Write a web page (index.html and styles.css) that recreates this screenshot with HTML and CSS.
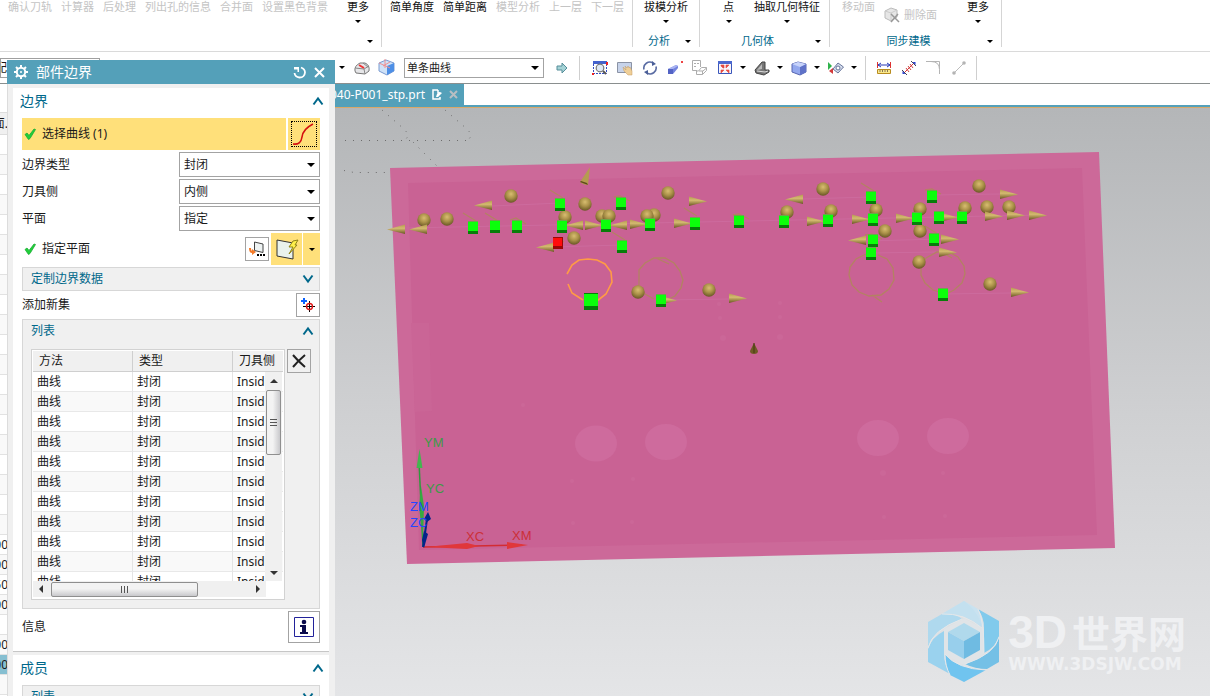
FILE: index.html
```html
<!DOCTYPE html>
<html lang="zh-CN">
<head>
<meta charset="utf-8">
<title>部件边界</title>
<link rel="stylesheet" href="styles.css">
</head>
<body>
<svg class="defs" aria-hidden="true">
  <defs>
    <symbol id="i-check" viewBox="0 0 12 12"><path d="M1 6.500L3 5l2 2.500L10 1l1.500.5L6 10.500 4.500 11.500z" fill="#1fd03a" stroke="#1cab34" stroke-width=".8"/></symbol>
    <symbol id="i-up" viewBox="0 0 12 10"><path d="M1.500 8.500L6 2.500l4.500 6" fill="none" stroke="#00688b" stroke-width="2"/></symbol>
    <symbol id="i-down" viewBox="0 0 12 10"><path d="M1.500 1.500L6 7.500l4.500-6" fill="none" stroke="#00688b" stroke-width="2"/></symbol>
  </defs>
</svg>
<div class="app">
  <header class="ribbon">
    <section class="group g-tools">
      <div class="items">
        <button class="cmd off">确认刀轨</button><button class="cmd off">计算器</button><button class="cmd off">后处理</button><button class="cmd off">列出孔的信息</button><button class="cmd off">合并面</button><button class="cmd off">设置黑色背景</button>
        <button class="cmd more">更多<i class="tri"></i></button>
      </div>
      <div class="foot"><span></span><i class="tri"></i></div>
    </section>
    <section class="group g-measure">
      <div class="items">
        <button class="cmd">简单角度</button><button class="cmd">简单距离</button><button class="cmd off">模型分析</button><button class="cmd off">上一层</button><button class="cmd off">下一层</button>
      </div>
    </section>
    <section class="group g-analysis">
      <div class="items"><button class="cmd">拔模分析<i class="tri"></i></button></div>
      <div class="foot"><span>分析</span><i class="tri"></i></div>
    </section>
    <section class="group g-geometry">
      <div class="items"><button class="cmd">点<i class="tri"></i></button><button class="cmd">抽取几何特征<i class="tri"></i></button></div>
      <div class="foot"><span>几何体</span><i class="tri"></i></div>
    </section>
    <section class="group g-sync">
      <div class="items">
        <button class="cmd off">移动面</button>
        <button class="cmd off side"><svg width="16" height="16" viewBox="0 0 16 16"><path d="M1 4l6-3 6 2v7l-6 4-6-3z" fill="#e6e6e6" stroke="#bbb"/><path d="M1 4l6 2 6-3M7 6v8" fill="none" stroke="#ccc"/><path d="M7 7l8 8M14 7l-7 8" stroke="#999" stroke-width="1.500"/></svg>删除面</button>
        <button class="cmd more">更多<i class="tri"></i></button>
      </div>
      <div class="foot"><span>同步建模</span><i class="tri"></i></div>
    </section>
  </header>

  <nav class="toolbar">
    <button class="scope">装配</button>
    <i class="tri drop first"></i>
    <button class="tool" aria-label="面规则"><svg width="16" height="16" viewBox="0 0 16 16"><path d="M1 11q-1-5 5-8l5 0q5 2 4 8l-4 3-9-1z" fill="#e6e6e8" stroke="#777"/><path d="M1 8l9 1 5-3M10 9l1 5M9 3l5 4" fill="none" stroke="#888"/><path d="M5 5l5 3" stroke="#e33" stroke-width="2"/></svg></button>
    <button class="tool" aria-label="体规则"><svg width="17" height="17" viewBox="0 0 17 17"><path d="M1 4l7-3 8 3v8l-7 4-8-4z" fill="#cfe2f8" stroke="#7b9bd0"/><path d="M9 7l7-3v8l-7 4z" fill="#4d8fe6"/><path d="M7 0v9M1 4l11 5M12 3L5 7" stroke="#f09090" fill="none"/></svg></button>
    <span class="picker rule"><select aria-label="曲线规则"><option>单条曲线</option></select></span>
    <button class="tool" aria-label="下一个"><svg width="12" height="12" viewBox="0 0 12 12"><path d="M1 4h5V1l5 5-5 5V8H1z" fill="#a5d3d6" stroke="#568e9a"/></svg></button>
    <i class="sep lead"></i>
    <button class="tool" aria-label="适合窗口"><svg width="16" height="16" viewBox="0 0 16 16"><path d="M1.500 1v12.500h13V1" fill="none" stroke="#334cc0" stroke-dasharray="2 1"/><path d="M1 1h14v3H1z" fill="#4462cc"/><circle cx="8" cy="8" r="3.800" fill="#dfe9f4" stroke="#777" stroke-width="1.200"/><path d="M11 11l3 3" stroke="#555" stroke-width="2"/><path d="M14 2h2v3h-2zM0 13h2v2H0z" fill="#e22"/></svg></button>
    <button class="tool" aria-label="平移"><svg width="16" height="16" viewBox="0 0 16 16"><path d="M.5 2.500h14v10H.5z" fill="#c7d3ea" stroke="#8b93a5"/><path d="M6 7l3 3-1-4 2 2 1-2 1 2 1-1 2 4v4h-4l-4-4z" fill="#efcf98" stroke="#c49a60" stroke-width=".5"/></svg></button>
    <button class="tool" aria-label="旋转"><svg width="16" height="16" viewBox="0 0 16 16"><g fill="none" stroke="#5a6ca3" stroke-width="1.600"><path d="M2 9.500A6 6 0 0 1 11 3"/><path d="M14 6.500A6 6 0 0 1 5 13"/></g><path d="M10 1l4 3-4 2zM6 15l-4-3 4-2z" fill="#4b5f98"/></svg></button>
    <button class="tool" aria-label="透视"><svg width="16" height="16" viewBox="0 0 16 16"><path d="M1 9l8-4 2 1v2l-5 6H1z" fill="#7382dd"/><path d="M1 9h5v5H1z" fill="#5363c4"/><path d="M1 9l8-4 2 1-5 3z" fill="#a9b4f2"/><path d="M14 1h2v2h-2z" fill="#e44"/></svg></button>
    <button class="tool" aria-label="定向视图"><svg width="17" height="16" viewBox="0 0 17 16"><path d="M6 10.500H1.500v-10h8V7M3 3.500h2M3 6.500h2M6 3.500h2M5.500 11v3.500h6l4-4V7.500h-5l-3 3.500zM8 11h4l3.500-3M11.500 11v3.500" fill="none" stroke="#adadad"/></svg></button>
    <button class="tool" aria-label="布局"><svg width="16" height="16" viewBox="0 0 16 16"><path d="M1.500 1.500h13v12h-13z" fill="#f8f5fa" stroke="#3a56bb"/><path d="M1 1h14v3H1z" fill="#4c69cf"/><path d="M4 5h3v3H6L4 6zM9 5h3L9 8zM4 13v-3h3zM9 10h3v3z" fill="#e54a40" stroke="#e54a40" stroke-width=".6"/></svg></button>
    <i class="tri drop"></i>
    <button class="tool" aria-label="剖切"><svg width="16" height="16" viewBox="0 0 16 16"><path d="M1 10l7-8h3v8l4 0v2l-5 3-8-2z" fill="#777" stroke="#444"/><path d="M3 10l5-6v5z" fill="#bbb"/><path d="M3 11l8 1 3-1" fill="none" stroke="#ddd"/></svg></button>
    <i class="tri drop"></i>
    <button class="tool" aria-label="着色"><svg width="16" height="16" viewBox="0 0 16 16"><path d="M1 4l6-2 8 2v8l-6 3-8-3z" fill="#93a8ee" stroke="#5665b1"/><path d="M9 7l6-3v8l-6 3z" fill="#5f72c8"/><path d="M1 4l6-2 8 2-6 3z" fill="#c7d3fa"/></svg></button>
    <i class="tri drop"></i>
    <button class="tool" aria-label="显示隐藏"><svg width="16" height="16" viewBox="0 0 16 16"><path d="M0 2l4 4-4 4z" fill="#2fb34c"/><path d="M1 11l4-3v6z" fill="#d23a3a"/><path d="M5 9l5-6 5.500 4-5.500 6z" fill="#d8dfee" stroke="#66749a"/><circle cx="10" cy="8" r="2" fill="#fff" stroke="#66749a"/></svg></button>
    <i class="tri drop"></i>
    <i class="sep"></i>
    <button class="tool" aria-label="测量"><svg width="14" height="14" viewBox="0 0 14 14"><path d="M.5 1v6M13.500 1v6" stroke="#d33"/><path d="M1 4h12M4 2L1 4l3 2M10 2l3 2-3 2" stroke="#2638b8" fill="none"/><path d="M.5 8.500h13v4H.5z" fill="#fbe98b" stroke="#b88c20"/><path d="M3 9v2M5.500 9v2M8 9v2M10.500 9v2" stroke="#875"/></svg></button>
    <button class="tool" aria-label="测量距离"><svg width="16" height="16" viewBox="0 0 16 16"><path d="M2 14L14 2" stroke="#d33"/><path d="M5 8l3 4M7 6l3 4M9 4l3 4" stroke="#c44"/><path d="M10 1l5 5M1 10l5 5" stroke="#445"/><path d="M11.500 2h3v3zM1.500 11v3h3z" fill="#2a3ed0"/></svg></button>
    <button class="tool" aria-label="圆角"><svg width="15" height="15" viewBox="0 0 15 15"><path d="M0 1.500h5q8.500 0 8.500 8V14M5 1.500h8.500v8" fill="none" stroke="#b4b4b4"/></svg></button>
    <button class="tool" aria-label="直线"><svg width="14" height="14" viewBox="0 0 14 14"><path d="M2 12L12 2" stroke="#bbb"/><circle cx="2" cy="12" r="1.800" fill="#b4b4b4"/><circle cx="12" cy="2" r="1.800" fill="#b4b4b4"/></svg></button>
    <i class="sep"></i>
  </nav>

  <main class="work">
    <aside class="navigator">
      <div class="nav-head"><span>面.</span></div>
      <ul class="nav-rows">
        <li></li><li></li><li></li><li></li><li></li><li></li><li></li><li></li><li></li><li></li><li></li><li></li><li></li><li></li><li></li><li></li><li></li><li></li><li></li><li></li>
        <li><span>00</span></li><li><span>00</span></li><li><span>50</span></li><li><span>00</span></li><li></li><li><span>00</span></li><li class="current"><span>00</span></li><li></li><li></li>
      </ul>
    </aside>
    <section class="document">
      <div class="tabs">
        <div class="tab"><span>040-P001_stp.prt</span>
          <svg width="10" height="11" viewBox="0 0 10 11"><path d="M6 1H1v9h7V8M6 1v3h2" fill="none" stroke="#fff" stroke-width="1.500"/><path d="M4 8l1-3 3-2 2 1-4 4z" fill="#fff"/></svg>
          <button class="tab-close" aria-label="关闭"><svg width="9" height="9" viewBox="0 0 9 9"><path d="M1 1l7 7M8 1L1 8" stroke="#b9bec2" stroke-width="2"/></svg></button>
        </div>
      </div>
      <div class="viewport">
        <svg class="scene" width="100%" height="100%">
          <defs>
            <radialGradient id="gold" cx=".5" cy=".35" r=".65"><stop offset="0" stop-color="#d8bd70"/><stop offset=".5" stop-color="#ab9249"/><stop offset="1" stop-color="#6a5726"/></radialGradient>
            <linearGradient id="cone" x1="0" y1="0" x2="0" y2="1"><stop offset="0" stop-color="#b59b50"/><stop offset=".4" stop-color="#d4ba70"/><stop offset="1" stop-color="#6a5623"/></linearGradient>
            <circle id="s" r="6.700" fill="url(#gold)"/>
            <path id="r" d="M0-4.500L18 .5 0 5z" fill="url(#cone)"/>
            <path id="l" d="M0-4.500L-18 .5 0 5z" fill="url(#cone)"/>
            <g id="c"><path d="M-5 4h10v3h-10z" fill="#087d0a"/><path d="M-5-6h10V4H-5z" fill="#0bff0b"/><path d="M-5-6h10v1H-5z" fill="#6aa84a"/></g>
          </defs>
          <g transform="translate(-327 -108)">
            <g class="grid-dots">
              <path d="M382 110l22 19 5 6-3 4M445 110l22 19 5 6-3 4M345 140.500h122M413 142l14 14 13 13M344 170.500l10 2h36"/>
            </g>
            <path d="M390 168l709-16 16 396-708 16z" fill="#cc6999"/>
            <path d="M408 183l674-15 15 367-678 15z" fill="#c96294"/>
            <path d="M411 323h18l3 88-17 1z" fill="#ca6596"/>
            <g fill="#ce6b9d"><ellipse cx="596" cy="443.500" rx="21" ry="18"/><ellipse cx="666" cy="442" rx="21" ry="18"/><ellipse cx="878" cy="438" rx="21" ry="18"/><ellipse cx="948" cy="436" rx="21" ry="18"/></g>
            <g fill="#cb6798">
              <circle cx="719" cy="304" r="2"/><circle cx="720" cy="318" r="2"/><circle cx="723" cy="338" r="3"/><circle cx="780" cy="303" r="2"/><circle cx="780" cy="317" r="2"/><circle cx="780" cy="337" r="3"/><circle cx="523" cy="405" r="2"/><circle cx="572" cy="481" r="2"/><circle cx="633" cy="479" r="2"/><circle cx="632" cy="522" r="2"/><circle cx="573" cy="523" r="2"/><circle cx="883" cy="473" r="3"/><circle cx="943" cy="473" r="2"/><circle cx="884" cy="517" r="2"/><circle cx="945" cy="516" r="2"/></g>
            <path d="M405 228l635-13M492 206l69-3M585 204l-8 1M553 247l69-2M661 300l68-1M803 199l68-2M932 195l68-1M866 241l75-2M871 253l68-1M943 294l68-1" stroke="#cd6b9e" fill="none"/>
            <g fill="none" stroke-width="1.300">
              <path d="M568 284l4 9 11 7M597 301l9-7 6-12-1-10-6-8-8-4-9-1-9 1-7 5-5 9" stroke="#ff9b45" stroke-width="1.600"/>
              <path d="M639 285l0-15 6-7 9-5 11 0 9 5 6 8 3 9-2 8-6 8-6 3M638 285l7 9 9 5M656 258l13 6M866 254l-10 5-6 8-1 8 3 10 7 7 10 4 12-1 8-6 5-9-1-12-6-9-9-4M872 295l10 7M942 293l-9-3-8-7-4-8 0-10 5-7 11-6 12 0 9 5 6 9 1 8-3 9-8 7-6 3M945 254l7 4" stroke="#b38262"/>
              <path d="M463 213l13 8M485 213l13 8M550 190l13 8M684 208l13 8M612 232l13 8M861 183l13 8M925 226l13 8M510 220l6-2 10 6M614 197l6-1 10 5M733 215l6-1 10 5M925 190l7-1 9 5M865 235l7-1 10 5M557 237l7 5" stroke="#b38262"/>
            </g>
            <g>
              <use href="#s" x="511" y="196"/><use href="#s" x="424" y="220"/><use href="#s" x="447" y="219"/><use href="#s" x="585" y="204"/><use href="#s" x="668" y="193"/><use href="#s" x="565" y="217"/><use href="#s" x="602" y="216"/><use href="#s" x="609" y="216"/><use href="#s" x="654" y="215"/><use href="#s" x="647" y="216"/><use href="#s" x="574" y="238"/><use href="#s" x="638" y="292"/><use href="#s" x="709" y="290"/>
              <use href="#s" x="823" y="189"/><use href="#s" x="979" y="186"/><use href="#s" x="787" y="212"/><use href="#s" x="831" y="211"/><use href="#s" x="876" y="210"/><use href="#s" x="920" y="209"/><use href="#s" x="965" y="208"/><use href="#s" x="987" y="207"/><use href="#s" x="1009" y="207"/><use href="#s" x="885" y="231"/><use href="#s" x="920" y="231"/><use href="#s" x="919" y="262"/><use href="#s" x="990" y="284"/>
            </g>
            <g>
              <use href="#l" x="492" y="205"/><use href="#l" x="405" y="229"/><use href="#l" x="427" y="229"/><use href="#l" x="583" y="225"/><use href="#l" x="627" y="225"/><use href="#l" x="554" y="247"/><use href="#l" x="803" y="199"/><use href="#l" x="866" y="240"/>
              <use href="#r" x="585" y="225"/><use href="#r" x="630" y="224"/><use href="#r" x="674" y="223"/><use href="#r" x="689" y="201"/><use href="#r" x="807" y="221"/><use href="#r" x="852" y="219"/><use href="#r" x="896" y="218"/><use href="#r" x="940" y="217"/><use href="#r" x="985" y="216"/><use href="#r" x="1007" y="215"/><use href="#r" x="1029" y="215"/><use href="#r" x="1000" y="194"/><use href="#r" x="941" y="239"/><use href="#r" x="939" y="252"/><use href="#r" x="1011" y="292"/><use href="#r" x="729" y="298"/><use href="#r" x="659" y="300"/>
              <path d="M590 167l-10 15q3 3 8 3z" fill="#b59b50"/><path d="M580 182l8 3-1-2-6-2z" fill="#5d4a1c"/><path d="M754 343l-4 8q0 3 4 3t4-3z" fill="#6e5a26"/><path d="M754 343v10" stroke="#453610"/>
            </g>
            <g>
              <use href="#c" x="560" y="204"/><use href="#c" x="621" y="203"/><use href="#c" x="473" y="227"/><use href="#c" x="495" y="226"/><use href="#c" x="517" y="226"/><use href="#c" x="562" y="226"/><use href="#c" x="606" y="225"/><use href="#c" x="650" y="224"/><use href="#c" x="695" y="223"/><use href="#c" x="622" y="246"/><use href="#c" x="661" y="300"/>
              <use href="#c" x="739" y="221"/><use href="#c" x="784" y="221"/><use href="#c" x="828" y="220"/><use href="#c" x="873" y="219"/><use href="#c" x="917" y="218"/><use href="#c" x="939" y="217"/><use href="#c" x="962" y="217"/><use href="#c" x="871" y="197"/><use href="#c" x="932" y="196"/><use href="#c" x="873" y="240"/><use href="#c" x="934" y="239"/><use href="#c" x="871" y="253"/><use href="#c" x="943" y="294"/>
              <path d="M584 293h14v17h-14z" fill="#087d0a"/><path d="M584 294h14v12h-14z" fill="#0bff0b"/>
              <path d="M553 237h10v12h-10z" fill="#9a0606"/><path d="M553 238h9v8h-9z" fill="#ff0c0c"/>
            </g>
            <g class="axes">
              <path d="M423 547l-4-85" stroke="#2e9a3c" stroke-width="1.500"/><path d="M419.500 449l-3 19h6z" fill="#43b64f"/><path d="M421 486l-2 20 4 36 1-36z" fill="#36aa40"/>
              <path d="M423 547l99-2" stroke="#d32c33" stroke-width="1.500"/><path d="M528 545l-21-3v7z" fill="#e0373b"/><path d="M426 547l41-4 12 3-12 3z" fill="#e0373b"/>
              <path d="M423 547l4-28" stroke="#04248a" stroke-width="2"/><path d="M428 512l-4 7 3 3 4-3zM424 531l4 3-4 14-2-8z" fill="#04248a"/>
              <text x="424" y="447" fill="#3d9a48">YM</text><text x="426" y="493" fill="#3d9a48">YC</text>
              <text x="466" y="541" fill="#cc3038">XC</text><text x="512" y="540" fill="#cc3038">XM</text>
              <text x="410" y="511" fill="#2446ff">ZM</text><text x="410" y="527" fill="#2446ff">ZC</text>
            </g>
          </g>
        </svg>
        <div class="watermark">
          <svg width="72" height="82" viewBox="0 0 72 82">
            <path d="M36 0L14 13q22-2 42 13L50 8z" fill="#c9e2f0"/><path d="M14 13L0 21v26q4-18 34-29Q28 12 14 13z" fill="#afd9ee"/><path d="M0 48q4-12 16-18v22q0 12 6 21L0 61z" fill="#9ad2ee"/><path d="M17 53q10 14 41 16L36 81 22 74q-5-10-5-21z" fill="#70c4ef"/><path d="M71 36v25l-12 7q-12 0-22-5 30-10 34-27z" fill="#74c0e6"/><path d="M50 8l21 12v15q-3 11-15 17V26q0-9-6-18z" fill="#81caec"/><path d="M54 27Q52 12 36 0L14 13q20-3 40 14z" fill="#c3e0ef"/>
            <path d="M36 17l20 11v25L36 64 16 53V28z" fill="#e0e4e7"/><path d="M36 22l16 9-16 9-16-9z" fill="#b0d9ec"/><path d="M20 31l16 9v18l-16-9z" fill="#98cfec"/><path d="M52 31l-16 9v18l16-9z" fill="#6fbbe2"/>
            <g fill="none" stroke="#e4e8eb"><path d="M14 13q22-1 40 14M0 47q4-18 34-29M17 53q0 12 5 21M17 53q12 15 41 16M37 63q30-10 34-27M50 8q6 10 6 44"/></g>
          </svg>
          <div class="brand"><div class="brand-name"><span>3D</span>世界网</div><div class="brand-url">WWW.3DSJW.COM</div></div>
        </div>
      </div>
    </section>
  </main>

  <section class="dialog" role="dialog" aria-labelledby="dlg-title">
    <header class="titlebar">
      <svg width="14" height="14" viewBox="0 0 14 14"><circle cx="7" cy="7" r="4.200" fill="none" stroke="#fff" stroke-width="2"/><path d="M7 0v3M7 11v3M0 7h3M11 7h3M2 2l2 2M10 10l2 2M12 2l-2 2M4 10l-2 2" stroke="#fff" stroke-width="2"/><circle cx="7" cy="7" r="1" fill="#fff"/></svg>
      <h1 id="dlg-title">部件边界</h1>
      <button aria-label="重置"><svg width="13" height="13" viewBox="0 0 13 13"><path d="M8 1.500q4 1.500 4 5-.5 5-5.500 5-4.500-.5-5-4.500" fill="none" stroke="#fff" stroke-width="1.800"/><path d="M1 1h5v5H4.500V3.500H1z" fill="#fff"/></svg></button>
      <button aria-label="关闭"><svg width="11" height="11" viewBox="0 0 11 11"><path d="M1 1l9 9M10 1l-9 9" stroke="#fff" stroke-width="2"/></svg></button>
    </header>
    <div class="dialog-body">
      <section class="panel">
        <h2>边界<svg width="12" height="10"><use href="#i-up"/></svg></h2>
        <div class="fields">
          <div class="row select-row">
            <div class="pick"><svg width="12" height="12"><use href="#i-check"/></svg>选择曲线 (1)</div>
            <button class="curve" aria-label="曲线"><svg width="24" height="24" viewBox="0 0 24 24"><path d="M1 22q8 1 9-7T21 2" fill="none" stroke="#d40f0f" stroke-width="1.600"/></svg></button>
          </div>
          <div class="row"><label for="btype">边界类型</label><span class="picker"><select id="btype"><option>封闭</option></select></span></div>
          <div class="row"><label for="side">刀具侧</label><span class="picker"><select id="side"><option>内侧</option></select></span></div>
          <div class="row"><label for="plane">平面</label><span class="picker"><select id="plane"><option>指定</option></select></span></div>
          <div class="row plane-row">
            <div class="pick plain"><svg width="12" height="12"><use href="#i-check"/></svg>指定平面</div>
            <button class="box" aria-label="平面对话框"><svg width="18" height="18" viewBox="0 0 18 18"><path d="M6.500 2l8.500 2v8.500l-8.500-2z" fill="#eef3f3" stroke="#444"/><path d="M1 8q0 5 3 5v2l4-3-4-3v2q-1 0-1-3z" fill="#f47a28"/><path d="M9 15h2M12 15h2M15 15h2" stroke="#000" stroke-width="2"/></svg></button>
            <div class="split"><button class="auto" aria-label="自动判断"><svg width="24" height="24" viewBox="0 0 24 24"><path d="M2 3l16 3v16L2 19z" fill="#e9f2ec" stroke="#333"/><path d="M18 4l5-1-3 5h2l-8 9 4-7h-4z" fill="#fff04a" stroke="#8f8418"/></svg></button><button class="arrow" aria-label="更多选项"><i class="tri"></i></button></div>
          </div>
          <button class="sub">定制边界数据<svg width="12" height="10"><use href="#i-down"/></svg></button>
          <div class="row add-row"><label for="add">添加新集</label><button class="box" id="add"><svg width="16" height="16" viewBox="0 0 16 16"><path d="M1 4h6M4 1v6" stroke="#0a62ff" stroke-width="2"/><path d="M3 9.500h12M9.500 4v11" stroke="#000"/><circle cx="9.500" cy="9.500" r="3" fill="none" stroke="#e01818" stroke-width="1.400"/></svg></button></div>
          <section class="list">
            <h3>列表<svg width="12" height="10"><use href="#i-up"/></svg></h3>
            <div class="list-body">
              <div class="grid">
                <div class="grid-clip">
                  <table>
                    <thead><tr><th>方法</th><th>类型</th><th>刀具侧</th></tr></thead>
                    <tbody>
                      <tr><td>曲线</td><td>封闭</td><td>Inside</td></tr><tr><td>曲线</td><td>封闭</td><td>Inside</td></tr><tr><td>曲线</td><td>封闭</td><td>Inside</td></tr><tr><td>曲线</td><td>封闭</td><td>Inside</td></tr><tr><td>曲线</td><td>封闭</td><td>Inside</td></tr><tr><td>曲线</td><td>封闭</td><td>Inside</td></tr><tr><td>曲线</td><td>封闭</td><td>Inside</td></tr><tr><td>曲线</td><td>封闭</td><td>Inside</td></tr><tr><td>曲线</td><td>封闭</td><td>Inside</td></tr><tr><td>曲线</td><td>封闭</td><td>Inside</td></tr><tr><td>曲线</td><td>封闭</td><td>Inside</td></tr>
                    </tbody>
                  </table>
                  <div class="vbar"><i class="step up"></i><i class="thumb"></i><i class="step down"></i></div>
                </div>
                <div class="hbar"><i class="step left"></i><i class="thumb"></i><i class="step right"></i></div>
              </div>
              <button class="box" aria-label="移除"><svg width="16" height="16" viewBox="0 0 16 16"><path d="M2 2q5 6 12 12M14 2Q7 8 2 14" fill="none" stroke="#222" stroke-width="2"/></svg></button>
            </div>
          </section>
          <div class="row info-row"><label for="info">信息</label><button class="box big" id="info"><svg width="20" height="20" viewBox="0 0 20 20"><path d="M.5.500h19v19H.5z" fill="#fff" stroke="#22229a"/><circle cx="10" cy="5" r="2.300" fill="#0a0a4c"/><path d="M6 8h6v7h2v2H6v-2h2v-5H6z" fill="#0a0a4c"/></svg></button></div>
        </div>
      </section>
      <section class="panel">
        <h2>成员<svg width="12" height="10"><use href="#i-up"/></svg></h2>
        <div class="fields"><button class="sub">列表<svg width="12" height="10"><use href="#i-down"/></svg></button></div>
      </section>
    </div>
  </section>
</div>
</body>
</html>
```

FILE: styles.css
```css
* { box-sizing: border-box; }
body {
  margin: 0;
  font: 12px/16px "Noto Sans", "Noto Sans CJK SC", sans-serif;
  color: #1a1a1a;
  background: #fff;
}
button, select { font: inherit; color: inherit; margin: 0; padding: 0; border: 0; background: none; border-radius: 0; }
h1, h2, h3, ul { margin: 0; padding: 0; font-weight: 400; }
svg { display: block; flex: none; }
.defs { position: absolute; width: 0; height: 0; }
.app { position: relative; display: flex; flex-direction: column; height: 100vh; overflow: hidden; }

.tri { flex: none; width: 0; height: 0; border: 3px solid transparent; border-top-color: #000; border-bottom: 0; }

/* Ribbon */
.ribbon { display: flex; flex: none; height: 52px; padding-bottom: 4px; border-bottom: 1px solid #dadada; font-size: 11px; line-height: 14px; }
.group { display: flex; flex-direction: column; justify-content: space-between; flex: none; border-right: 1px solid #d5d5d5; }
.items { display: flex; align-items: flex-start; gap: 9px; padding: 0 8px; }
.cmd { display: flex; flex-direction: column; align-items: center; gap: 6px; white-space: nowrap; color: #111; }
.cmd.off { color: #c4c4c4; }
.cmd.side { flex-direction: row; gap: 4px; padding-top: 7px; }
.more { margin-left: auto; }
.foot { display: flex; align-items: center; height: 12px; padding-right: 8px; color: #00688b; }
.foot span { flex: 1; text-align: center; }
.g-tools { width: 382px; }
.g-tools .items { padding-right: 12px; }
.g-measure { width: 251px; }
.g-analysis { width: 67px; }
.g-analysis .items { justify-content: center; }
.g-geometry { width: 130px; }
.g-geometry .items { gap: 20px; padding: 0 9px; justify-content: flex-end; }
.g-sync { width: 172px; }
.g-sync .items { padding: 0 12px; }

/* Selection toolbar */
.toolbar { display: flex; align-items: center; flex: none; height: 32px; border-bottom: 1px solid #8a8f8f; }
.scope { width: 100px; height: 20px; border: 1px solid #a0a0a0; text-align: left; text-indent: -18px; overflow: hidden; }
.tool { display: grid; place-items: center; width: 25px; height: 24px; }
.drop { margin: 0 3px; }
.drop.first { margin-left: 239px; margin-right: 4px; }
.sep { width: 1px; height: 24px; margin: 0 5px; background: #cfcfcf; }
.sep.lead { margin-right: 7px; }
.picker { position: relative; display: block; }
.picker select { appearance: none; display: block; width: 100%; height: 100%; padding: 0 4px; border: 1px solid #a3a3a3; background: #fff; }
.picker::after { content: ""; position: absolute; right: 5px; top: 50%; margin-top: -2px; border: 4px solid transparent; border-top-color: #000; border-bottom: 0; pointer-events: none; }
.rule { width: 140px; height: 20px; margin: 0 5px; font-size: 11px; line-height: 14px; }
.rule select { padding: 0 2px; }

/* Work area */
.work { display: flex; flex: 1; min-height: 0; }
.navigator { flex: none; width: 327px; padding-top: 28px; overflow: hidden; }
.nav-head { height: 23px; border-top: 1px solid #ddd; border-bottom: 1px solid #ddd; background: #f0f0f0; line-height: 22px; }
.nav-head span, .nav-rows span { display: flex; justify-content: flex-end; width: 8px; white-space: nowrap; }
.nav-rows { list-style: none; }
.nav-rows li { height: 20px; border-bottom: 1px solid #e2e2e2; line-height: 20px; }
.nav-rows li:nth-child(even) { background: #f9f9f9; }
.nav-rows li.current { background: #86bfd1; }
.document { display: flex; flex-direction: column; flex: 1; min-width: 0; }
.tabs { display: flex; height: 23px; flex: none; border-bottom: 2px solid #54a0b9; }
.tab { display: flex; align-items: center; gap: 7px; padding: 0 6px 0 3px; background: #54a0b9; color: #fff; }
.tab-close { display: block; }
.viewport { position: relative; flex: 1; min-height: 0; border-top: 1px solid #d9a869; background: linear-gradient(#b4b6b8, #cfd0d2 52%, #e4e5e7); }
.scene { position: absolute; inset: 0; }
.grid-dots path { fill: none; stroke: #6d6d6d; stroke-width: 1; stroke-dasharray: 1 7; }
.axes text { font: 13px "Liberation Sans", sans-serif; }
.watermark { position: absolute; right: 24px; bottom: 13px; display: flex; align-items: center; gap: 8px; color: #eff0f2; }
.brand { display: grid; gap: 4px; }
.brand-name { display: flex; align-items: center; font: 700 38px/40px "Noto Sans CJK SC", sans-serif; white-space: nowrap; }
.brand-name span { font: 700 46px/40px "Liberation Sans", sans-serif; padding-right: 5px; }
.brand-url { font: 700 17px/16px "DejaVu Sans", sans-serif; }

/* Floating dialog */
.dialog { position: absolute; left: 7px; top: 60px; bottom: 0; width: 328px; display: flex; flex-direction: column; background: #f0f0f0; overflow: hidden; }
.titlebar { display: flex; align-items: center; gap: 8px; flex: none; height: 24px; padding: 0 10px 0 7px; background: #54a0b9; color: #fff; }
.titlebar h1 { flex: 1; font-size: 14px; line-height: 24px; }
.dialog-body { flex: 1; min-height: 0; padding: 4px 6px 0 5px; border-left: 1px solid #dcdcdc; }
.panel { margin-bottom: 3px; padding-bottom: 8px; border-bottom: 1px solid #c6c6c6; background: #fff; }
.panel h2 { display: flex; align-items: center; justify-content: space-between; height: 26px; margin-bottom: 4px; padding: 0 5px 0 7px; color: #00688b; font-size: 14px; }
.fields { display: flex; flex-direction: column; gap: 2px; padding: 0 9px; }
.row { display: flex; align-items: center; height: 25px; }
.row label { flex: 1; }
.row .picker { width: 141px; height: 25px; }
.select-row, .plane-row, .info-row { height: 32px; }
.select-row { gap: 2px; }
.pick { display: flex; align-items: center; gap: 6px; flex: 1; height: 32px; padding-left: 2px; background: #ffe07a; }
.pick.plain { background: none; }
.curve { display: grid; place-items: center; width: 32px; height: 32px; background: #ffe07a; }
.curve svg { box-sizing: content-box; border: 1px dotted #000; }
.box { display: grid; place-items: center; flex: none; width: 24px; height: 24px; border: 1px solid #a3a3a3; background: #fff; }
.box.big { width: 32px; height: 32px; }
.split { display: flex; gap: 1px; margin-left: 2px; }
.split button { display: grid; place-items: center; height: 32px; background: #ffe07a; }
.auto { width: 31px; }
.arrow { width: 17px; }
.add-row { height: 24px; }
.sub { display: flex; align-items: center; justify-content: space-between; height: 24px; padding: 0 5px 0 8px; border: 1px solid #d7d7d7; background: #f0f0f0; color: #00688b; }
.list { padding: 0 8px 8px; border: 1px solid #d7d7d7; background: #f0f0f0; }
.list h3 { display: flex; align-items: center; justify-content: space-between; height: 22px; margin: 0 -3px 7px 0; color: #00688b; font-size: 12px; }
.list-body { display: flex; align-items: flex-start; gap: 2px; }
.list-body .box { background: #f0f0f0; }
.grid { flex: 1; min-width: 0; padding: 1px 1px 2px; border: 1px solid #d2d2d2; background: #fff; }
.grid-clip { position: relative; height: 230px; overflow: hidden; }
.grid table { width: 100%; table-layout: fixed; border-collapse: separate; border-spacing: 0; }
.grid th, .grid td { height: 20px; padding: 0 0 0 4px; border-right: 1px solid #e4e4e4; border-bottom: 1px solid #e8e8e8; font-weight: 400; text-align: left; white-space: nowrap; overflow: hidden; }
.grid th { height: 21px; padding-left: 6px; border-color: #cfcfcf; background: #f0f0f0; }
.grid th:nth-child(-n+2) { width: 100px; }
.grid th:last-child, .grid td:last-child { border-right: 0; }
.grid tbody tr:nth-child(even) { background: #f9f9f9; }
.vbar { position: absolute; top: 21px; right: 1px; bottom: 0; width: 17px; display: flex; flex-direction: column; align-items: center; padding: 7px 0 6px; background: #f0f0f0; }
.thumb { border: 1px solid #8f8f8f; border-radius: 2px; }
.vbar .thumb { width: 15px; height: 65px; margin: 7px 0 auto; background: repeating-linear-gradient(#555 0 1px, transparent 1px 3px) center / 7px 7px no-repeat, linear-gradient(90deg, #f3f3f3 45%, #c9c9cc); }
.hbar { display: flex; align-items: center; height: 16px; margin-right: 17px; padding: 0 6px; background: #f0f0f0; }
.hbar .thumb { width: 147px; height: 15px; margin: 0 auto 0 8px; background: repeating-linear-gradient(90deg, #555 0 1px, transparent 1px 3px) center / 8px 7px no-repeat, linear-gradient(#f3f3f3 45%, #c9c9cc); }
.step { border: 4px solid transparent; }
.step.up { border-top: 0; border-bottom-color: #333; }
.step.down { border-bottom: 0; border-top-color: #333; }
.step.left { border-left: 0; border-right-color: #333; }
.step.right { border-right: 0; border-left-color: #333; }
```
